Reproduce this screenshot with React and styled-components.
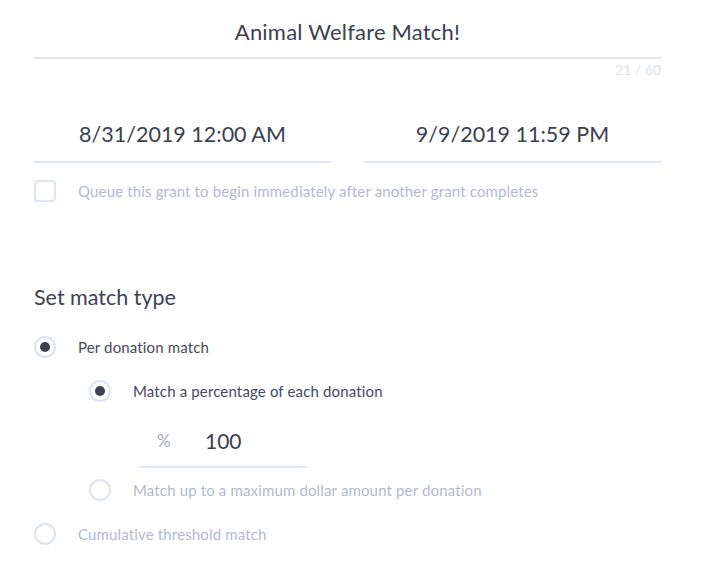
import React from "react"
import styled, {createGlobalStyle} from "styled-components"

const GlobalStyle = createGlobalStyle`
  body {
    margin: 0;
    background: #ffffff;
    font-family: Lato, "Open Sans", sans-serif;
  }
`

const Page = styled.div`
  width: 627px;
  padding-left: 34px;
`

const TitleField = styled.div`
  height: 59px;
  box-sizing: border-box;
  padding-top: 6px;
  border-bottom: 2px solid #dfe4f7;
  display: flex;
  align-items: center;
  justify-content: center;
  font-size: 22px;
  letter-spacing: 0.2px;
  color: #3b3f4f;
`

const Counter = styled.div`
  margin-top: 3px;
  text-align: right;
  font-size: 14px;
  line-height: 16px;
  color: #dde1f0;
`

const DateRow = styled.div`
  margin-top: 41px;
  display: flex;
  gap: 33px;
`

const DateField = styled.div`
  flex: 1;
  height: 44px;
  box-sizing: border-box;
  padding-bottom: 12px;
  border-bottom: 2px solid #dfe4f7;
  display: flex;
  align-items: center;
  justify-content: center;
  font-size: 21.5px;
  color: #3b3f4f;
`

const CheckRow = styled.label`
  margin-top: 17px;
  display: flex;
  align-items: center;
  gap: 22px;
  height: 22px;
`

const Box = styled.span`
  width: 22px;
  height: 22px;
  box-sizing: border-box;
  border: 2px solid #dfe4f6;
  border-radius: 4px;
  background: #fff;
`

const Label = styled.span`
  font-size: 15px;
  letter-spacing: 0.15px;
  color: ${p => (p.$muted ? "#b4b9cf" : "#464a5b")};
`

const Heading = styled.h2`
  margin: 83px 0 0;
  font-size: 21.5px;
  line-height: 24px;
  font-weight: 400;
  color: #3e4252;
`

const RadioRow = styled.label`
  margin-top: ${p => p.$gap}px;
  margin-left: ${p => (p.$nested ? 55 : 0)}px;
  display: flex;
  align-items: center;
  gap: 22px;
  height: 22px;
`

const Ring = styled.span`
  width: 22px;
  height: 22px;
  box-sizing: border-box;
  border: 2px solid #dde3f6;
  border-radius: 50%;
  background: #fff;
  display: flex;
  align-items: center;
  justify-content: center;

  &::after {
    content: "";
    width: 10px;
    height: 10px;
    border-radius: 50%;
    background: ${p => (p.$checked ? "#3e4252" : "transparent")};
  }
`

const PercentField = styled.div`
  margin: 12px 0 0 105px;
  width: 168px;
  height: 54px;
  box-sizing: border-box;
  border-bottom: 2px solid #dfe4f7;
  display: flex;
  align-items: center;
  padding-left: 18px;
`

const Unit = styled.span`
  width: 48px;
  font-size: 17px;
  color: #a5aac0;
`

const Amount = styled.span`
  font-size: 21px;
  color: #3b3f4f;
`

const Radio = ({checked, muted, nested, gap, children}) => (
  <RadioRow $nested={nested} $gap={gap}>
    <Ring $checked={checked} />
    <Label $muted={muted}>{children}</Label>
  </RadioRow>
)

const App = () => {
  return (
    <Page>
      <GlobalStyle />
      <TitleField>Animal Welfare Match!</TitleField>
      <Counter>21 / 60</Counter>

      <DateRow>
        <DateField>8/31/2019 12:00 AM</DateField>
        <DateField>9/9/2019 11:59 PM</DateField>
      </DateRow>

      <CheckRow>
        <Box />
        <Label $muted>Queue this grant to begin immediately after another grant completes</Label>
      </CheckRow>

      <Heading>Set match type</Heading>

      <Radio checked gap={27}>Per donation match</Radio>
      <Radio checked nested gap={22}>Match a percentage of each donation</Radio>
      <PercentField>
        <Unit>%</Unit>
        <Amount>100</Amount>
      </PercentField>
      <Radio muted nested gap={11}>Match up to a maximum dollar amount per donation</Radio>
      <Radio muted gap={22}>Cumulative threshold match</Radio>
    </Page>
  )
}

export default App
